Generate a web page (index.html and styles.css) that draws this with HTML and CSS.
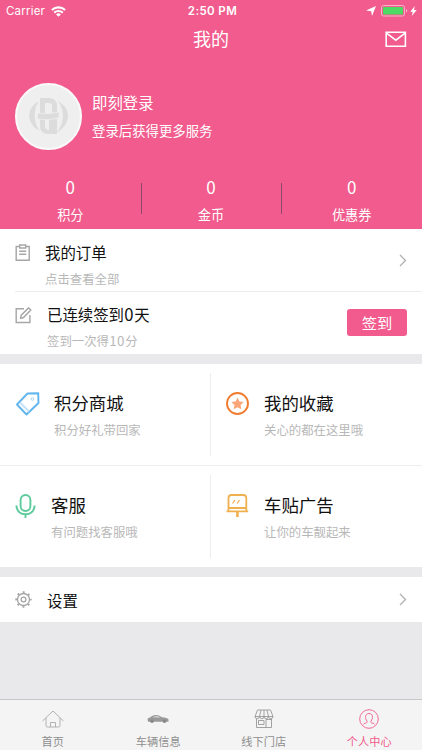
FILE: index.html
```html
<!DOCTYPE html>
<html lang="zh-CN">
<head>
    <meta charset="utf-8">
    <meta name="viewport" content="width=device-width, initial-scale=1.0, user-scalable=no">
    <title>我的</title>
    <link rel="stylesheet" href="styles.css">
</head>

<body>
    <div class="header">
        <div class="status-bar">
            <div class="status-left">
                <span>Carrier</span>
                <svg width="15" height="11" viewBox="0 0 15 11" fill="none" stroke="#fff" stroke-width="2.1">
                    <path d="M.9 4.1a9.4 9.4 0 0 1 13.2 0M3.2 6.7a6.1 6.1 0 0 1 8.6 0"/>
                    <path d="M7.5 10.8L5.1 8.400a3.400 3.400 0 0 1 4.800 0z" fill="#fff" stroke="none"/>
                </svg>
            </div>
            <div class="status-time">2:50 PM</div>
            <div class="status-right">
                <svg width="10" height="10" viewBox="0 0 10 10" fill="#fff"><path d="M10 0L6 10 5.2 5.2 0 4.4z"/></svg>
                <svg width="27" height="12" viewBox="0 0 27 12">
                    <rect x=".5" y=".5" width="23" height="10.5" rx="2" fill="none" stroke="#f9b0c9"/>
                    <rect x="2" y="2" width="20" height="7.5" rx=".8" fill="#4cd964"/>
                    <path d="M25 4v3.6q1.3-.5 1.3-1.8T25 4z" fill="#f9b0c9"/>
                </svg>
                <svg width="7" height="10" viewBox="0 0 7 10" fill="#fff"><path d="M4.8 0L.3 5.7h2.5L1.8 10l4.9-5.9H4z"/></svg>
            </div>
        </div>

        <div class="nav-bar">
            <h1>我的</h1>
            <svg class="mail" width="22" height="17" viewBox="0 0 22 17" fill="none" stroke="#fff" stroke-width="1.6">
                <path d="M1.2 1.2h19.2v14H1.2zM1.2 1.8l9.6 7.4 9.6-7.4"/>
            </svg>
        </div>

        <div class="user">
            <div class="avatar">
                <svg width="40" height="38" viewBox="0 0 40 38" fill="#dcdcdc">
                    <path d="M9.500 4.500C-3 11-3 27 10.500 33.500C4.500 26 4 13 9.500 4.500z"/>
                    <path d="M29 4.500c14 6 13 24-1.500 31c7.500-8 9-22 1.500-31z"/>
                    <path fill-rule="evenodd" d="M11 1h10q7 1 7 8v8h-5V9q0-3-3-3h-4v11h-5z"/>
                    <path d="M11 22h5v7q0 4 4 4v-11h8v15h-8q-9 0-9-8z"/>
                    <path d="M8.500 16q10 2 21.500-1v6q-11 3-21.500 1z" stroke="#efefef" stroke-width=".8"/>
                </svg>
            </div>
            <div>
                <p class="user-name">即刻登录</p>
                <p class="user-tip">登录后获得更多服务</p>
            </div>
        </div>

        <div class="stats">
            <div class="stat"><b>0</b><span>积分</span></div>
            <div class="stat"><b>0</b><span>金币</span></div>
            <div class="stat"><b>0</b><span>优惠券</span></div>
        </div>
    </div>

    <div class="row order">
        <svg class="row-icon" width="16" height="18" viewBox="0 0 16 18" fill="none" stroke="#a6a6a6" stroke-width="1.4">
            <path d="M4.500 2.500H1.200v13.800h13V2.500h-3.300M4.700 1h6v3h-6zM4.200 7.300h7M4.200 10.300h7"/>
        </svg>
        <div class="row-text">
            <p class="row-title">我的订单</p>
            <p class="row-desc">点击查看全部</p>
        </div>
        <svg class="arrow" width="8" height="13" viewBox="0 0 8 13"><path d="M1 1l5.500 5.500L1 12"/></svg>
    </div>

    <div class="row sign">
        <svg class="row-icon" width="17" height="17" viewBox="0 0 17 17" fill="none" stroke="#a6a6a6" stroke-width="1.4">
            <path d="M9 1.800H1.200v13.700h13.700V8M5.600 11.200l.6-3L13.500.900l2.300 2.200-7.300 7.400z"/>
        </svg>
        <div class="row-text">
            <p class="row-title">已连续签到<span class="num">0</span>天</p>
            <p class="row-desc">签到一次得<span class="num">10</span>分</p>
        </div>
        <button class="sign-btn">签到</button>
    </div>

    <div class="menu">
        <div class="menu-item">
            <svg width="26" height="26" viewBox="0 0 26 26" fill="none" stroke="#62b5ec" stroke-width="1.9">
                <path d="M2 13.500L12.500 2.500l10.700-.3.300 9.800L11.500 23.500z" stroke-linejoin="round"/>
                <path d="M5 11.500l9 9" stroke="#c3e1f8"/>
                <circle cx="17.500" cy="8" r="1.300" stroke="#a9d5f5" stroke-width="1"/>
            </svg>
            <div class="menu-text">
                <p class="menu-title">积分商城</p>
                <p class="menu-desc">积分好礼带回家</p>
            </div>
        </div>
        <div class="menu-item">
            <svg width="24" height="26" viewBox="0 0 24 26">
                <circle cx="11.500" cy="12.500" r="10.500" fill="none" stroke="#f07c30" stroke-width="1.900"/>
                <path d="M11.500 6.600l1.900 3.800 4.200.600-3 3 .7 4.200-3.800-2-3.800 2 .7-4.200-3-3 4.200-.6z" fill="#fba676"/>
            </svg>
            <div class="menu-text">
                <p class="menu-title">我的收藏</p>
                <p class="menu-desc">关心的都在这里哦</p>
            </div>
        </div>
        <div class="menu-item service">
            <svg width="22" height="26" viewBox="0 0 22 26" fill="none" stroke="#5bcb9b" stroke-width="1.900">
                <rect x="5.600" y="2" width="9.800" height="16" rx="4.900"/>
                <path d="M1.500 12.500v1q1 7.500 9 7.800 8-.3 9-7.800v-1M10.500 21.500V25"/>
            </svg>
            <div class="menu-text">
                <p class="menu-title">客服</p>
                <p class="menu-desc">有问题找客服哦</p>
            </div>
        </div>
        <div class="menu-item">
            <svg width="24" height="26" viewBox="0 0 24 26" fill="none" stroke="#efb04f" stroke-width="1.800">
                <path d="M2.500 18V5q0-3 3-3h11.800q3 0 3 3v13"/>
                <path d="M2.500 15h17.800M.5 18.400h21.700" />
                <path d="M11.400 18.500v5.500" stroke-width="2.600"/>
                <path d="M6.500 10.500l2.500-3.300M11 10.500l2.500-3.300" stroke-width="1.200"/>
            </svg>
            <div class="menu-text">
                <p class="menu-title">车贴广告</p>
                <p class="menu-desc">让你的车靓起来</p>
            </div>
        </div>
    </div>

    <div class="row setting">
        <svg class="row-icon" width="17" height="17" viewBox="0 0 17 17" fill="none" stroke="#a6a6a6" stroke-width="1.300">
            <circle cx="8.500" cy="8.500" r="6"/>
            <circle cx="8.500" cy="8.500" r="2.400"/>
            <circle cx="8.500" cy="8.500" r="7.300" stroke-width="1.800" stroke-dasharray="2 3.733" stroke-dashoffset="1"/>
        </svg>
        <p class="row-title">设置</p>
        <svg class="arrow" width="8" height="13" viewBox="0 0 8 13"><path d="M1 1l5.500 5.500L1 12"/></svg>
    </div>

    <div class="tab-bar">
        <div class="tab">
            <svg width="22" height="20" viewBox="0 0 22 20" fill="none" stroke="#aaa" stroke-width=".9">
                <path d="M.5 12L11 2l10.500 10M4 9v7.500Q4 18 5.500 18h11q1.500 0 1.500-1.500V9M8.500 18v-4.500h5V18"/>
            </svg>
            <span>首页</span>
        </div>
        <div class="tab">
            <svg width="22" height="20" viewBox="0 0 22 20">
                <path d="M.5 9.500Q3 8.500 5 7q5-2.300 10 1.300 5 .2 6.500 2.200v2.200H1z" fill="#999"/>
                <path d="M5.500 8.200q4.500-2 8 .3z" fill="#e4e4e4"/>
                <circle cx="5" cy="12.300" r="1.800" fill="#888"/>
                <circle cx="17.500" cy="12.300" r="1.800" fill="#888"/>
            </svg>
            <span>车辆信息</span>
        </div>
        <div class="tab">
            <svg width="20" height="20" viewBox="0 0 20 20" fill="none" stroke="#999" stroke-width=".9">
                <path d="M3.500 1h13l2.500 6.500H1zM7 1L5.500 7.500M10 1v6.500M13 1l1.500 6.500M2.500 10v8.500h15V10M12 18.500v-8h5.500M4.500 11.500h5.500v4H4.500z"/>
                <path d="M1 7.500q.2 2.200 2.200 2.200t2.300-2.200q.2 2.200 2.300 2.200T10 7.500q.2 2.200 2.200 2.200t2.300-2.200q.2 2.200 2.300 2.200T19 7.500"/>
            </svg>
            <span>线下门店</span>
        </div>
        <div class="tab active">
            <svg width="20" height="20" viewBox="0 0 20 20" fill="none" stroke="#f05b8c" stroke-width=".9">
                <circle cx="10" cy="10" r="9.300"/>
                <path d="M4.500 15.500q0-1.300 3-1.700 1-.3.600-1.600C5.500 9 6 4.500 10 4.500s4.500 4.500 1.900 7.700q-.4 1.300.6 1.600 3 .4 3 1.700"/>
            </svg>
            <span>个人中心</span>
        </div>
    </div>
</body>

</html>
```

FILE: styles.css
```css
* {
    box-sizing: border-box;
}

body {
    margin: 0;
    height: 750px;
    display: flex;
    flex-direction: column;
    background-color: #e9e9eb;
    font-family: "Noto Sans CJK SC", sans-serif;
    overflow: hidden;
}

p, h1 {
    margin: 0;
    font-weight: 400;
    white-space: nowrap;
}

svg {
    display: block;
    flex: none;
}

/* header */
.header {
    height: 229px;
    background-color: #f15b8d;
    color: #fff;
}

.status-bar {
    height: 22px;
    padding: 0 5px 0 6px;
    display: grid;
    grid-template-columns: 1fr auto 1fr;
    align-items: center;
    font-family: Inter, sans-serif;
    font-size: 11.5px;
    line-height: 22px;
}

.status-left, .status-right {
    display: flex;
    align-items: center;
}

.status-left {
    gap: 6px;
    letter-spacing: 0.2px;
}

.status-right {
    justify-content: flex-end;
    gap: 5px;
}

.status-right svg:last-child {
    margin-left: -3px;
}

.status-time {
    padding-left: 2px;
    font-weight: 600;
    letter-spacing: 0.4px;
}

.nav-bar {
    height: 34px;
    padding: 0 15px;
    display: grid;
    grid-template-columns: 1fr auto 1fr;
    align-items: center;
}

.nav-bar h1 {
    grid-column: 2;
    margin-top: -2px;
    font-size: 18px;
    line-height: 32px;
}

.mail {
    justify-self: end;
}

.user {
    height: 120px;
    padding: 0 15px;
    display: flex;
    align-items: center;
    gap: 10px;
}

.avatar {
    width: 67px;
    height: 67px;
    border: 2px solid #fafafa;
    border-radius: 50%;
    background-color: #efefef;
    display: flex;
    justify-content: center;
    align-items: center;
}

.user-name {
    margin-top: -1px;
    font-size: 15.4px;
    line-height: 28px;
}

.user-tip {
    font-size: 13.4px;
    line-height: 28px;
}

.stats {
    display: flex;
}

.stat {
    flex: 1;
    display: flex;
    flex-direction: column;
    align-items: center;
    position: relative;
}

.stat + .stat::before {
    content: "";
    position: absolute;
    left: 0;
    top: 7px;
    width: 1px;
    height: 31px;
    background-color: #8a4a68;
}

.stat b {
    font-size: 17px;
    font-weight: 400;
    line-height: 21px;
}

.stat span {
    margin-top: 7px;
    font-size: 13.2px;
    line-height: 22px;
}

/* list rows */
.row {
    display: flex;
    align-items: flex-start;
    background-color: #fff;
    padding: 0 15px;
}

.row-title {
    color: #111;
    font-size: 15.4px;
    line-height: 24px;
}

.row-desc {
    margin-top: 5px;
    color: #b8b8b8;
    font-size: 12.4px;
    line-height: 20px;
}

.num {
    margin: 0 0.3px;
    font-size: 1.08em;
    line-height: 1;
    letter-spacing: 0.4px;
}

.arrow {
    margin-left: auto;
    fill: none;
    stroke: #b0b0b0;
    stroke-width: 1.3;
}

.order {
    height: 62px;
    padding-top: 11px;
}

.order .row-icon {
    margin-top: 4px;
}

.order .row-text {
    margin-left: 14px;
}

.order .arrow {
    margin-top: 14px;
}

.sign {
    height: 63px;
    padding-top: 11px;
    background: linear-gradient(#ececec, #ececec) 15px 0 / 100% 1px no-repeat #fff;
}

.sign .row-icon {
    margin-top: 5px;
}

.sign .row-text {
    margin-left: 15px;
}

.sign-btn {
    width: 60px;
    height: 27px;
    margin: 7px 0 0 auto;
    padding: 0;
    border: none;
    border-radius: 3px;
    background-color: #f15b8d;
    color: #fff;
    font-family: inherit;
    font-size: 15.3px;
    line-height: 25px;
}

/* menu grid */
.menu {
    margin-top: 10px;
    height: 203px;
    flex: none;
    display: grid;
    grid-template-columns: 211px 211px;
    grid-template-rows: 102px 101px;
    background-color: #fff;
}

.menu-item {
    display: flex;
    align-items: flex-start;
    gap: 13px;
    padding: 27px 0 0 15px;
    background: linear-gradient(#ededed, #ededed) 0 100% / 100% 1px no-repeat;
}

.menu-item:nth-child(odd) {
    background: linear-gradient(#ededed, #ededed) 0 100% / 100% 1px no-repeat,
        linear-gradient(#ededed, #ededed) 100% 9px / 1px 83px no-repeat;
}

.menu-item:nth-child(n+3) {
    background-size: 0 0, 1px 83px;
}

.menu-item:nth-child(even) {
    gap: 14px;
}

.menu-item.service {
    gap: 14px;
}

.menu-title {
    margin-top: -1px;
    color: #111;
    font-size: 17.4px;
    line-height: 26px;
}

.menu-desc {
    margin-top: 4px;
    color: #b8b8b8;
    font-size: 12.4px;
    line-height: 20px;
}

.setting {
    height: 45px;
    margin-top: 10px;
    align-items: center;
}

.setting .row-title {
    margin-left: 15px;
}

/* bottom tabs */
.tab-bar {
    height: 51px;
    margin-top: auto;
    border-top: 1px solid #c8c8c8;
    background-color: #f4f4f4;
    display: flex;
}

.tab {
    flex: 1;
    padding-top: 9px;
    display: flex;
    flex-direction: column;
    align-items: center;
    color: #8e8e8e;
    font-size: 11.2px;
    line-height: 16px;
}

.tab span {
    margin-top: 4px;
}

.tab.active {
    color: #f05b8c;
}
```
